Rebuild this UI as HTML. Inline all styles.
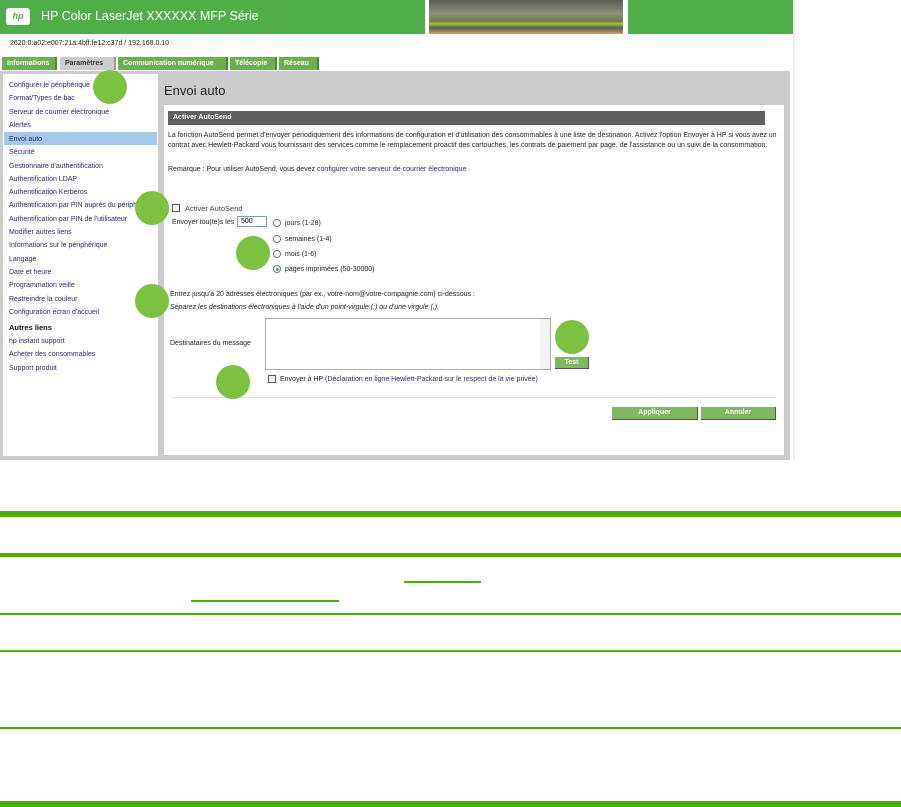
<!DOCTYPE html>
<html><head><meta charset="utf-8"><style>
*{margin:0;padding:0;box-sizing:border-box}
body{width:901px;height:807px;background:#fff;position:relative;font-family:"Liberation Sans",Arial,sans-serif;overflow:hidden}
.a{position:absolute}
.t{font-size:7px;color:#222;white-space:nowrap}
.nav{font-size:7px;color:#2a2a7a;white-space:nowrap;position:absolute;left:9px}
.c{position:absolute;width:34px;height:34px;border-radius:50%;background:#7dc142}
.tab{position:absolute;top:57px;height:13px;background:#6ab04c;color:#fff;font-size:7px;font-weight:bold;padding:3px 5px;white-space:nowrap;border-right:2px solid #4a8a30}
.rad{position:absolute;width:8px;height:8px;border:1px solid #777;border-radius:50%;background:#fff}
.btn{position:absolute;background:#7fb85e;color:#fff;font-size:7px;font-weight:bold;text-align:center;border-right:1px solid #555;border-bottom:1px solid #555;line-height:12px}
.g{position:absolute;left:0;width:901px;background:#4fae05}
</style></head><body>
<div class="a" style="left:0;top:0;width:425px;height:34px;background:#4fae4a"></div>
<div class="a" style="left:6px;top:8px;width:24px;height:17px;background:#fff;border-radius:3px;color:#4fae4a;font-size:9px;font-style:italic;font-weight:bold;text-align:center;line-height:17px">hp</div>
<div class="a" style="left:41px;top:9px;font-size:12.5px;color:#fff">HP Color LaserJet XXXXXX MFP Série</div>
<div class="a" style="left:429px;top:0;width:194px;height:34px;background:linear-gradient(180deg,#5a5d50 0%,#8c8f7c 40%,#6f7a45 62%,#9ac43c 70%,#5b5e55 82%,#d9a25a 100%)"></div>
<div class="a" style="left:628px;top:0;width:165px;height:34px;background:#4fae4a"></div>
<div class="a" style="left:793px;top:0;width:2px;height:460px;background:#eee"></div>
<div class="a t" style="left:10px;top:40px">2620:0:a02:e007:21a:4bff:fe12:c37d / 192.168.0.10</div>
<div class="tab" style="left:2px;width:55px">Informations</div>
<div class="tab" style="left:60px;width:56px;background:#ccc;color:#333;border-right-color:#999">Paramètres</div>
<div class="tab" style="left:118px;width:110px">Communication numérique</div>
<div class="tab" style="left:230px;width:47px">Télécopie</div>
<div class="tab" style="left:279px;width:40px">Réseau</div>
<div class="a" style="left:0;top:71px;width:790px;height:389px;background:#ccc"></div>
<div class="a" style="left:3px;top:74px;width:155px;height:382px;background:#fff"></div>
<div class="a" style="left:4px;top:132px;width:153px;height:13px;background:#a4c8e8"></div>
<div class="nav" style="top:82px">Configurer le périphérique</div>
<div class="nav" style="top:95px">Format/Types de bac</div>
<div class="nav" style="top:109px">Serveur de courrier électronique</div>
<div class="nav" style="top:122px">Alertes</div>
<div class="nav" style="top:136px">Envoi auto</div>
<div class="nav" style="top:149px">Sécurité</div>
<div class="nav" style="top:163px">Gestionnaire d'authentification</div>
<div class="nav" style="top:176px">Authentification LDAP</div>
<div class="nav" style="top:189px">Authentification Kerberos</div>
<div class="nav" style="top:202px">Authentification par PIN auprès du périph</div>
<div class="nav" style="top:216px">Authentification par PIN de l'utilisateur</div>
<div class="nav" style="top:229px">Modifier autres liens</div>
<div class="nav" style="top:242px">Informations sur le périphérique</div>
<div class="nav" style="top:256px">Langage</div>
<div class="nav" style="top:269px">Date et heure</div>
<div class="nav" style="top:282px">Programmation veille</div>
<div class="nav" style="top:296px">Restreindre la couleur</div>
<div class="nav" style="top:309px">Configuration écran d'accueil</div>
<div class="nav" style="top:323px;color:#111;font-weight:bold;font-size:7.5px">Autres liens</div>
<div class="nav" style="top:338px">hp instant support</div>
<div class="nav" style="top:351px">Acheter des consommables</div>
<div class="nav" style="top:365px">Support produit</div>
<div class="a" style="left:164px;top:83px;font-size:13px;color:#222">Envoi auto</div>
<div class="a" style="left:164px;top:105px;width:620px;height:350px;background:#fff"></div>
<div class="a" style="left:168px;top:111px;width:597px;height:14px;background:#606060;color:#fff;font-size:7px;font-weight:bold;padding:3px 5px">Activer AutoSend</div>
<div class="a t" style="left:168px;top:131px;line-height:10px">La fonction AutoSend permet d'envoyer périodiquement des informations de configuration et d'utilisation des consommables à une liste de destination. Activez l'option Envoyer à HP si vous avez un<br>contrat avec Hewlett-Packard vous fournissant des services comme le remplacement proactif des cartouches, les contrats de paiement par page, de l'assistance ou un suivi de la consommation.</div>
<div class="a t" style="left:168px;top:166px">Remarque : Pour utiliser AutoSend, vous devez <span style="color:#2a2a7a">configurer votre serveur de courrier électronique</span></div>
<div class="a" style="left:172px;top:204px;width:8px;height:8px;border:1px solid #556"></div>
<div class="a t" style="left:185px;top:204px;font-size:7.5px;color:#444">Activer AutoSend</div>
<div class="a t" style="left:172px;top:219px">Envoyer tou(te)s les</div>
<div class="a" style="left:237px;top:216px;width:30px;height:11px;border:1px solid #7a9ac0;font-size:7px;padding:1px 3px">500</div>
<div class="rad" style="left:273px;top:219px"></div><div class="a t" style="left:285px;top:220px">jours (1-28)</div>
<div class="rad" style="left:273px;top:235px"></div><div class="a t" style="left:285px;top:236px">semaines (1-4)</div>
<div class="rad" style="left:273px;top:250px"></div><div class="a t" style="left:285px;top:251px">mois (1-6)</div>
<div class="rad" style="left:273px;top:265px"></div><div class="a" style="left:276px;top:268px;width:3px;height:3px;border-radius:50%;background:#5a5"></div><div class="a t" style="left:285px;top:266px">pages imprimées (50-30000)</div>
<div class="a t" style="left:170px;top:291px">Entrez jusqu'à 20 adresses électroniques (par ex., votre-nom@votre-compagnie.com) ci-dessous :</div>
<div class="a t" style="left:170px;top:304px;font-style:italic">Séparez les destinations électroniques à l'aide d'un point-virgule (;) ou d'une virgule (,).</div>
<div class="a" style="left:265px;top:318px;width:286px;height:52px;border:1px solid #aab"></div>
<div class="a" style="left:540px;top:319px;width:10px;height:50px;background:#f2f2f2"></div>
<div class="a t" style="left:170px;top:340px">Destinataires du message</div>
<div class="btn" style="left:555px;top:357px;width:34px;height:12px">Test</div>
<div class="a" style="left:268px;top:375px;width:8px;height:8px;border:1px solid #556"></div>
<div class="a t" style="left:280px;top:376px">Envoyer à HP <span style="color:#2a2a7a">(Déclaration en ligne Hewlett-Packard sur le respect de la vie privée)</span></div>
<div class="a" style="left:172px;top:397px;width:604px;height:1px;background:#ddd"></div>
<div class="btn" style="left:612px;top:407px;width:86px;height:13px">Appliquer</div>
<div class="btn" style="left:701px;top:407px;width:75px;height:13px">Annuler</div>
<div class="c" style="left:93px;top:70px"></div>
<div class="c" style="left:135px;top:191px"></div>
<div class="c" style="left:236px;top:236px"></div>
<div class="c" style="left:135px;top:284px"></div>
<div class="c" style="left:555px;top:320px"></div>
<div class="c" style="left:216px;top:365px"></div>
<div class="g" style="top:511px;height:6px"></div>
<div class="g" style="top:553px;height:4px"></div>
<div class="a" style="left:404px;top:581px;width:77px;height:2px;background:#4fae05"></div>
<div class="a" style="left:191px;top:600px;width:148px;height:2px;background:#4fae05"></div>
<div class="g" style="top:613px;height:2px"></div>
<div class="g" style="top:650px;height:2px"></div>
<div class="g" style="top:727px;height:2px"></div>
<div class="g" style="top:801px;height:6px"></div>
</body></html>
